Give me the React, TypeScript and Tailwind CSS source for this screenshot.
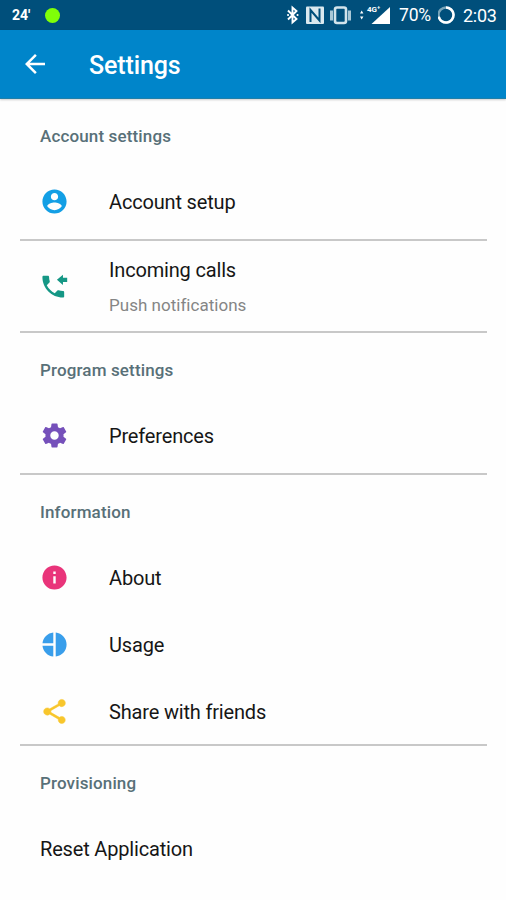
import type { ReactNode } from "react";

function Icon({ color, children }: { color: string; children: ReactNode }) {
  return (
    <svg viewBox="0 0 24 24" className={`mb-px mr-px h-[29px] w-[29px] shrink-0 ${color}`} fill="currentColor">
      {children}
    </svg>
  );
}

function Label({ children, className }: { children: string; className: string }) {
  return <span className={`block whitespace-nowrap leading-6 ${className}`}>{children}</span>;
}

function Header({ children }: { children: string }) {
  return (
    <h2 className="flex h-[69px] items-center pl-10 pt-[5px] text-[#587078]">
      <Label className="text-[17px] font-medium tracking-[0.14px]">{children}</Label>
    </h2>
  );
}

function Row({ icon, label }: { icon?: ReactNode; label: string }) {
  return (
    <div className="flex h-[67px] items-center gap-[39px] pl-10">
      {icon}
      <Label className="pt-px text-[20px] tracking-[-0.17px] text-[#161616]">{label}</Label>
    </div>
  );
}

function Divider() {
  return <div className="mx-5 h-[2px] w-[467px] bg-[#c8c8c8]" />;
}

function StatusBar() {
  return (
    <div className="flex h-[30px] items-center bg-[#004f7b] text-white">
      <span className="ml-3 w-[33px] text-[14px] font-bold">24'</span>
      <span className="h-[15px] w-[15px] rounded-full bg-[#80ff08]" />
      <svg className="ml-[225px] h-[30px] w-[106px] shrink-0" viewBox="285 0 106 30" fill="none">
        <path d="M288 10.500l8.500 8.500-4 3.500v-15l4 3.500-8.500 8.500" stroke="#fff" strokeWidth="1.900" />
        <path d="M288 15h.1M297.500 15h.1" stroke="#fff" strokeWidth="2" strokeLinecap="round" />
        <rect x="306" y="6.500" width="18" height="17.500" rx="1" fill="#dbe9ef" />
        <path d="M310.500 22V10l9 10.500V8.500" stroke="#004f7b" strokeWidth="2" />
        <rect x="335" y="7.500" width="11" height="15.500" rx="2" stroke="#d2e4ec" strokeWidth="2.600" />
        <path d="M331.500 10.500v10M349.500 10.500v10" stroke="#a9c8d7" strokeWidth="3" />
        <path d="M360 13.500l1.700-3 1.700 3zM360 16.500l1.700 3 1.700-3z" fill="#fff" />
        <path d="M371.500 24l18.500-17v17z" fill="#fff" />
        <text x="367" y="12" fill="#fff" fontFamily="Roboto, sans-serif" fontSize="8" fontWeight="700">4G⁺</text>
      </svg>
      <span className="ml-2 w-[39px] text-[17.500px] tracking-[-0.2px]">70%</span>
      <svg className="h-5 w-5 shrink-0" viewBox="0 0 20 20" fill="none">
        <circle cx="8" cy="10" r="7.500" stroke="#78a4b9" strokeWidth="2.500" />
        <path d="M8 2.500a7.500 7.500 0 1 1-7.300 9.200" stroke="#fff" strokeWidth="2.500" />
      </svg>
      <span className="ml-[5px] text-[18px] tracking-[-0.3px]">2:03</span>
    </div>
  );
}

export default function App() {
  return (
    <main className="h-[900px] w-[506px] overflow-hidden bg-[#fefefe] font-[Roboto,sans-serif]">
      <StatusBar />
      <header className="flex h-[69px] items-center border-b border-[#207fa8] bg-[#0085ca] text-white shadow-[0_1px_2px_rgba(0,0,0,0.2)]">
        <svg viewBox="0 0 24 24" className="ml-5 h-[30px] w-[30px]" fill="currentColor">
          <path d="M20 11H7.830l5.590-5.590L12 4l-8 8 8 8 1.410-1.410L7.830 13H20v-2z" />
        </svg>
        <h1 className="ml-[39px] pt-1 text-[25px] font-medium leading-8 tracking-[-0.12px]">Settings</h1>
      </header>
      <section>
        <Header>Account settings</Header>
        <Row label="Account setup" icon={
          <Icon color="text-[#139fe5]">
            <path d="M12 2C6.480 2 2 6.480 2 12s4.480 10 10 10 10-4.480 10-10S17.520 2 12 2zm0 3c1.660 0 3 1.340 3 3s-1.340 3-3 3-3-1.340-3-3 1.340-3 3-3zm0 14.200c-2.500 0-4.710-1.280-6-3.220.03-1.990 4-3.080 6-3.080 1.990 0 5.970 1.090 6 3.080-1.290 1.940-3.500 3.220-6 3.220z" />
          </Icon>
        } />
        <div className="h-1" />
        <Divider />
        <div className="flex h-[90px] items-center gap-[39px] pl-10">
          <Icon color="text-[#159785]">
            <path transform="translate(-1 1)" d="M20 15.500c-1.250 0-2.450-.2-3.570-.570-.350-.110-.740-.030-1.020.240l-2.200 2.200c-2.830-1.440-5.150-3.750-6.590-6.590l2.200-2.210c.280-.260.360-.650.250-1C8.700 6.450 8.500 5.250 8.500 4c0-.550-.450-1-1-1H4c-.550 0-1 .450-1 1 0 9.390 7.610 17 17 17 .550 0 1-.450 1-1v-3.500c0-.550-.450-1-1-1z" />
            <path d="M22.500 5.500H19V3l-5 4.300 5 4.300V9h3.500z" />
          </Icon>
          <div className="pt-[2px]">
            <Label className="text-[20px] tracking-[-0.17px] text-[#161616]">Incoming calls</Label>
            <Label className="mt-[11px] text-[17px] tracking-[0.02px] text-[#858585]">Push notifications</Label>
          </div>
        </div>
        <Divider />
      </section>
      <section>
        <Header>Program settings</Header>
        <Row label="Preferences" icon={
          <Icon color="text-[#7550ba]">
            <path d="M19.430 12.980c.040-.320.070-.640.070-.980s-.030-.660-.070-.980l2.110-1.650c.190-.150.240-.420.120-.640l-2-3.460c-.120-.220-.390-.300-.610-.220l-2.490 1c-.520-.400-1.080-.730-1.690-.980l-.380-2.650C14.460 2.180 14.250 2 14 2h-4c-.250 0-.460.180-.490.420l-.380 2.650c-.610.250-1.170.590-1.690.980l-2.490-1c-.230-.090-.490 0-.610.220l-2 3.460c-.130.220-.070.490.120.640l2.110 1.650c-.040.320-.070.650-.070.980s.030.660.070.980l-2.110 1.650c-.190.150-.240.420-.120.640l2 3.460c.120.220.390.300.610.220l2.490-1c.520.400 1.080.730 1.690.980l.380 2.650c.030.240.240.420.490.420h4c.250 0 .460-.180.490-.420l.380-2.650c.610-.250 1.170-.590 1.690-.980l2.490 1c.230.090.490 0 .610-.220l2-3.460c.120-.220.070-.490-.120-.640l-2.110-1.650zM12 15.500c-1.930 0-3.500-1.570-3.500-3.500s1.570-3.500 3.500-3.500 3.500 1.570 3.500 3.500-1.570 3.500-3.500 3.500z" />
          </Icon>
        } />
        <div className="h-1" />
        <Divider />
      </section>
      <section>
        <Header>Information</Header>
        <Row label="About" icon={
          <Icon color="text-[#e9347a]">
            <path d="M12 2C6.480 2 2 6.480 2 12s4.480 10 10 10 10-4.480 10-10S17.520 2 12 2zm1 15h-2v-6h2v6zm0-8h-2V7h2v2z" />
          </Icon>
        } />
        <Row label="Usage" icon={
          <Icon color="text-[#399eeb]">
            <path d="M11 2.050V11H2.050C2.500 6.300 6.300 2.500 11 2.050zM11 13v8.950C6.300 21.500 2.500 17.700 2.050 13zM13 2.050c5.050.500 9 4.770 9 9.950s-3.950 9.450-9 9.950z" />
          </Icon>
        } />
        <Row label="Share with friends" icon={
          <Icon color="text-[#f8c62c]">
            <path d="M18 16.080c-.760 0-1.440.300-1.960.770L8.910 12.700c.050-.230.090-.460.090-.700s-.040-.470-.090-.700l7.050-4.110c.540.500 1.250.810 2.040.810 1.660 0 3-1.340 3-3s-1.340-3-3-3-3 1.340-3 3c0 .240.040.470.090.700L8.040 9.810C7.500 9.310 6.790 9 6 9c-1.660 0-3 1.340-3 3s1.340 3 3 3c.790 0 1.500-.310 2.040-.810l7.120 4.160c-.050.210-.080.430-.080.650 0 1.610 1.310 2.920 2.920 2.920s2.920-1.310 2.920-2.920-1.310-2.920-2.920-2.920z" stroke="currentColor" strokeWidth=".4" />
          </Icon>
        } />
        <div className="-mt-px"><Divider /></div>
      </section>
      <section>
        <Header>Provisioning</Header>
        <Row label="Reset Application" />
      </section>
    </main>
  );
}
